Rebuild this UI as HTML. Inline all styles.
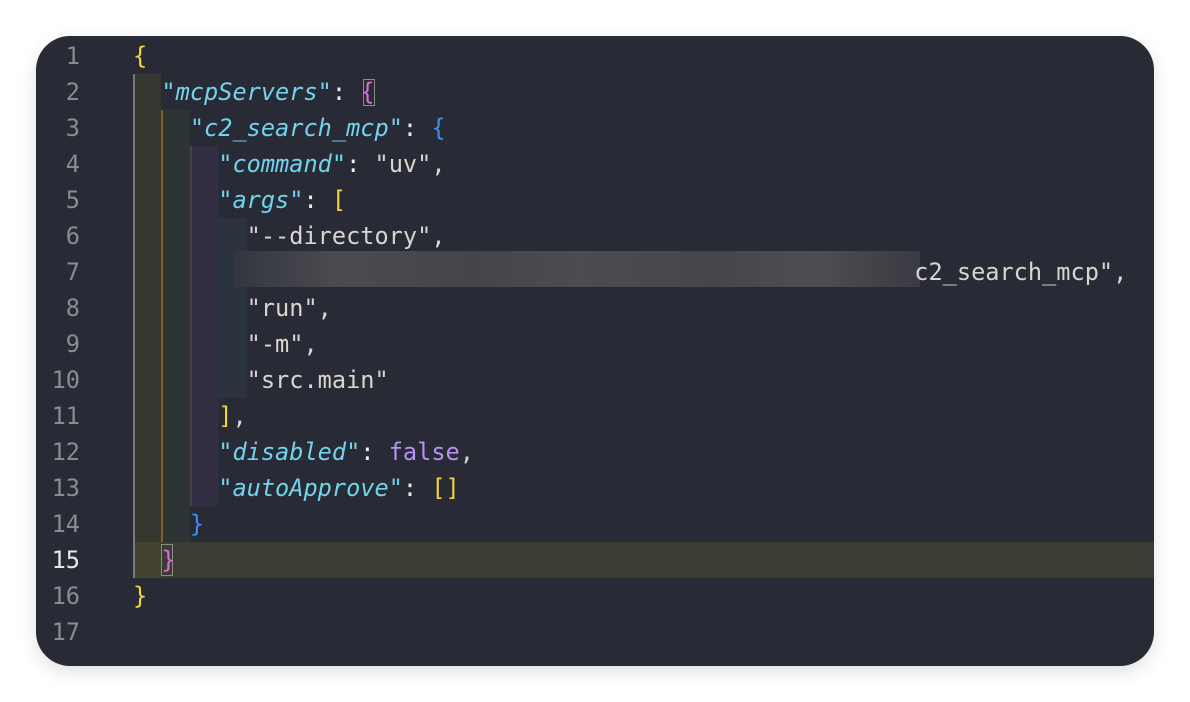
<!DOCTYPE html>
<html><head><meta charset="utf-8"><style>
body{margin:0;width:1190px;height:702px;background:#fff;overflow:hidden;position:relative}
.win{position:absolute;left:36px;top:36px;width:1118px;height:630px;background:#282a36;border-radius:34px;overflow:hidden;box-shadow:0 6px 18px rgba(0,0,0,.12)}
.b{position:absolute}
.ln{position:absolute;left:0;width:44px;text-align:right;font:23.6px "DejaVu Sans Mono",monospace;color:#8a8b90;line-height:36px}
.code{position:absolute;left:97px;font:23.6px "DejaVu Sans Mono",monospace;line-height:36px;white-space:pre;color:#d8d6cc}
.k{color:#72d3ea;font-style:italic}
.y{color:#f2d33c}.p{color:#d66fdc}.bl{color:#3d8ff4}.f{color:#b792f2}.w{color:#eee}
</style></head><body><div class="win">
<div class="b" style="left:97px;top:506px;width:1021px;height:36px;background:#3d3c33"></div>
<div class="b" style="left:97px;top:38px;width:28px;height:504px;background:#34362f"></div>
<div class="b" style="left:97px;top:506px;width:28px;height:36px;background:#44432f"></div>
<div class="b" style="left:97px;top:38px;width:2px;height:504px;background:#7a7a78"></div>
<div class="b" style="left:125px;top:74px;width:29px;height:432px;background:#2c3436"></div>
<div class="b" style="left:125px;top:74px;width:2px;height:432px;background:#8a5e22"></div>
<div class="b" style="left:154px;top:110px;width:28px;height:360px;background:#332f42"></div>
<div class="b" style="left:154px;top:110px;width:2px;height:360px;background:#48404e"></div>
<div class="b" style="left:182px;top:182px;width:29px;height:180px;background:#2b333f"></div>
<div class="b" style="left:197px;top:215px;width:687px;height:36px;background:linear-gradient(90deg,#34363f,#4a4b50 15%,#44454b 35%,#4b4c52 50%,#45464c 70%,#4d4e53 85%,#3a3b42)"></div>
<div class="b" style="left:327px;top:43px;width:12px;height:27px;border:1.5px solid #8a8a8a;box-sizing:border-box"></div>
<div class="b" style="left:125px;top:508px;width:12px;height:32px;border:1.5px solid #8a8a8a;box-sizing:border-box"></div>
<div class="ln" style="top:2px">1<br>2<br>3<br>4<br>5<br>6<br>7<br>8<br>9<br>10<br>11<br>12<br>13<br>14<br><span style="color:#e8e8e8">15</span><br>16<br>17</div>
<div class="code" style="top:2px"><span class="y">{</span>
  <span class="k">"mcpServers"</span><span class="w">:</span> <span class="p">{</span>
    <span class="k">"c2_search_mcp"</span><span class="w">:</span> <span class="bl">{</span>
      <span class="k">"command"</span><span class="w">:</span> "uv",
      <span class="k">"args"</span><span class="w">:</span> <span class="y">[</span>
        "--directory",
                                                       c2_search_mcp",
        "run",
        "-m",
        "src.main"
      <span class="y">]</span>,
      <span class="k">"disabled"</span><span class="w">:</span> <span class="f">false</span>,
      <span class="k">"autoApprove"</span><span class="w">:</span> <span class="y">[]</span>
    <span class="bl">}</span>
  <span class="p">}</span>
<span class="y">}</span>
</div>
</div></body></html>
